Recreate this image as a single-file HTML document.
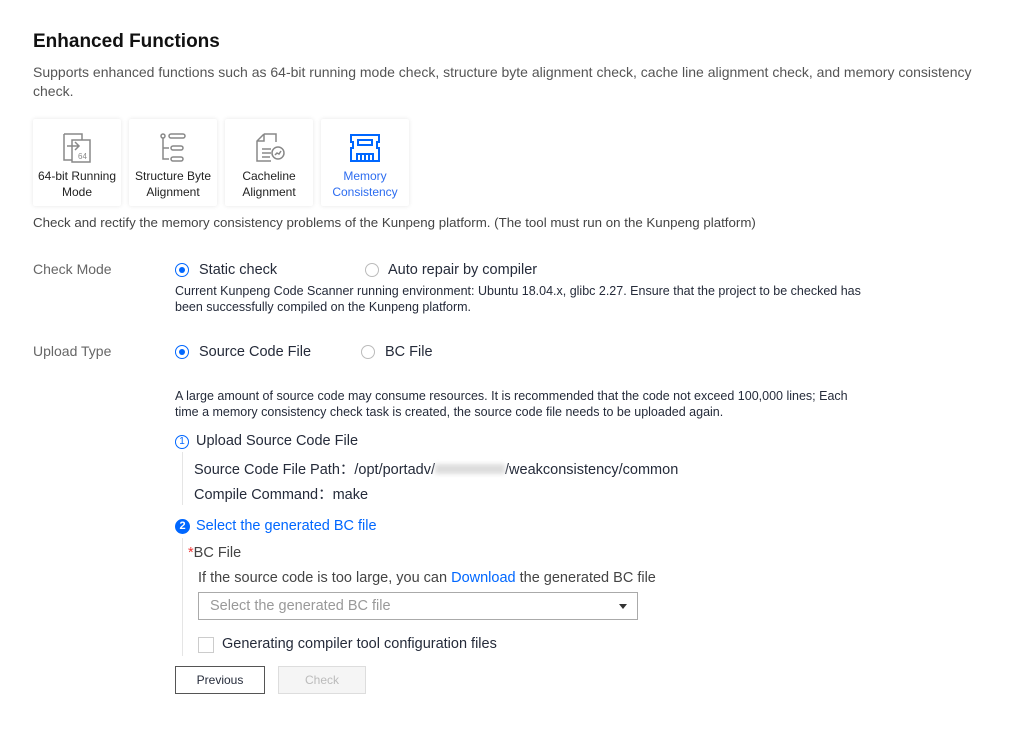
<!DOCTYPE html><html><head><style>
body{margin:0;background:#fff;font-family:"Liberation Sans",sans-serif;color:#252b3a;width:1012px;height:749px;position:relative;overflow:hidden}
.a{position:absolute;white-space:nowrap}
.card{position:absolute;top:119px;width:88px;height:87px;background:#fff;box-shadow:0 0 4px rgba(0,0,0,.1);border-radius:2px;text-align:center;font-size:12px;line-height:16px;color:#222}
.card svg{display:block;margin:11px auto 2px}
.radio{position:absolute;width:14px;height:14px;border:1px solid #bbb;border-radius:50%;box-sizing:border-box}
.radio.on{border-color:#0067ff}
.radio.on:after{content:"";position:absolute;left:3px;top:3px;width:6px;height:6px;border-radius:50%;background:#0067ff}
.s14{font-size:14.5px}.s12{font-size:12.5px}
.lbl{color:#666;font-size:14px}
</style></head><body>
<div class="a" style="left:33px;top:31px;font-size:19px;font-weight:bold;color:#111">Enhanced Functions</div>
<div class="a" style="left:33px;top:63px;line-height:19px;color:#555;white-space:normal;width:940px;font-size:14px">Supports enhanced functions such as 64-bit running mode check, structure byte alignment check, cache line alignment check, and memory consistency check.</div>

<div class="card" style="left:33px"><svg width="36" height="36" viewBox="0 0 36 36" fill="none" stroke="#888" stroke-width="1.5"><path d="M5 4h18v6M5 4v26h8"/><rect x="13" y="10" width="18" height="22"/><path d="M8 16h12M16 12l4 4-4 4"/><text x="19" y="29" font-size="8" fill="#888" stroke="none" font-family="Liberation Sans">64</text></svg>64-bit Running<br>Mode</div>
<div class="card" style="left:129px"><svg width="36" height="36" viewBox="0 0 36 36" fill="none" stroke="#888" stroke-width="1.5"><circle cx="8" cy="6" r="2"/><path d="M8 8v21h6M8 18h6"/><rect x="14" y="4" width="16" height="4" rx="2"/><rect x="16" y="16" width="12" height="4" rx="2"/><rect x="16" y="27" width="12" height="4" rx="2"/></svg>Structure Byte<br>Alignment</div>
<div class="card" style="left:225px"><svg width="36" height="36" viewBox="0 0 36 36" fill="none" stroke="#888" stroke-width="1.5"><path d="M13 4h12v8M13 4l-7 7v20h14M6 11h7V4"/><path d="M11 19h9M11 23h9M11 27h8"/><circle cx="27" cy="23" r="6"/><path d="M24 25l2-2 2 1 2-3"/></svg>Cacheline<br>Alignment</div>
<div class="card" style="left:321px;color:#2c6cf0"><svg width="36" height="36" viewBox="0 0 36 36" fill="none" stroke="#0067ff" stroke-width="2"><path d="M4 5h28v7h-2v6h2v13H4V18h2v-6H4z"/><rect x="11" y="10" width="14" height="5"/><path d="M10 31v-7h16v7M14 24v7M18 24v7M22 24v7"/></svg>Memory<br>Consistency</div>

<div class="a" style="left:33px;top:215px;color:#444;font-size:13.3px">Check and rectify the memory consistency problems of the Kunpeng platform. (The tool must run on the Kunpeng platform)</div>

<div class="a lbl" style="left:33px;top:261px">Check Mode</div>
<div class="radio on" style="left:175px;top:263px"></div><div class="a s14" style="left:199px;top:262px">Static check</div>
<div class="radio" style="left:365px;top:263px"></div><div class="a s14" style="left:388px;top:262px">Auto repair by compiler</div>
<div class="a s12" style="left:175px;top:283px;line-height:16px">Current Kunpeng Code Scanner running environment: Ubuntu 18.04.x, glibc 2.27. Ensure that the project to be checked has<br>been successfully compiled on the Kunpeng platform.</div>

<div class="a lbl" style="left:33px;top:343px">Upload Type</div>
<div class="radio on" style="left:175px;top:345px"></div><div class="a s14" style="left:199px;top:344px">Source Code File</div>
<div class="radio" style="left:361px;top:345px"></div><div class="a s14" style="left:385px;top:344px">BC File</div>
<div class="a s12" style="left:175px;top:388px;line-height:16px">A large amount of source code may consume resources. It is recommended that the code not exceed 100,000 lines; Each<br>time a memory consistency check task is created, the source code file needs to be uploaded again.</div>

<div class="a" style="left:175px;top:435px;width:14px;height:14px;border:1px solid #0067ff;border-radius:50%;box-sizing:border-box;color:#0067ff;font-size:10px;text-align:center;line-height:12px">1</div>
<div class="a s14" style="left:196px;top:433px">Upload Source Code File</div>
<div class="a" style="left:182px;top:452px;width:1px;height:53px;background:#e5e5e5"></div>
<div class="a s14" style="left:194px;top:458px">Source Code File Path：/opt/portadv/<span style="display:inline-block;width:70px;height:10px;background:#ddd;filter:blur(2px)"></span>/weakconsistency/common</div>
<div class="a s14" style="left:194px;top:483px">Compile Command：make</div>

<div class="a" style="left:175px;top:519px;width:15px;height:15px;background:#0067ff;border-radius:50%;color:#fff;font-size:11px;font-weight:bold;text-align:center;line-height:15px">2</div>
<div class="a s14" style="left:196px;top:518px;color:#0067ff">Select the generated BC file</div>
<div class="a" style="left:182px;top:538px;width:1px;height:118px;background:#e5e5e5"></div>
<div class="a s14" style="left:188px;top:545px;color:#444"><span style="color:#e33">*</span>BC File</div>
<div class="a s14" style="left:198px;top:570px;color:#444">If the source code is too large, you can <span style="color:#0067ff">Download</span> the generated BC file</div>
<div class="a" style="left:198px;top:592px;width:440px;height:28px;border:1px solid #aaa;box-sizing:border-box"><span class="a s14" style="left:11px;top:5px;color:#999">Select the generated BC file</span><span class="a" style="right:10px;top:11px;border:4px solid transparent;border-top:5px solid #333;border-bottom:0"></span></div>
<div class="a" style="left:198px;top:637px;width:16px;height:16px;border:1px solid #ccc;box-sizing:border-box"></div>
<div class="a s14" style="left:222px;top:636px">Generating compiler tool configuration files</div>

<div class="a" style="left:175px;top:666px;width:90px;height:28px;border:1px solid #555;box-sizing:border-box;font-size:12px;text-align:center;line-height:26px">Previous</div>
<div class="a" style="left:278px;top:666px;width:88px;height:28px;border:1px solid #ddd;background:#f5f5f5;box-sizing:border-box;font-size:12px;text-align:center;line-height:26px;color:#bbb">Check</div>
</body></html>
